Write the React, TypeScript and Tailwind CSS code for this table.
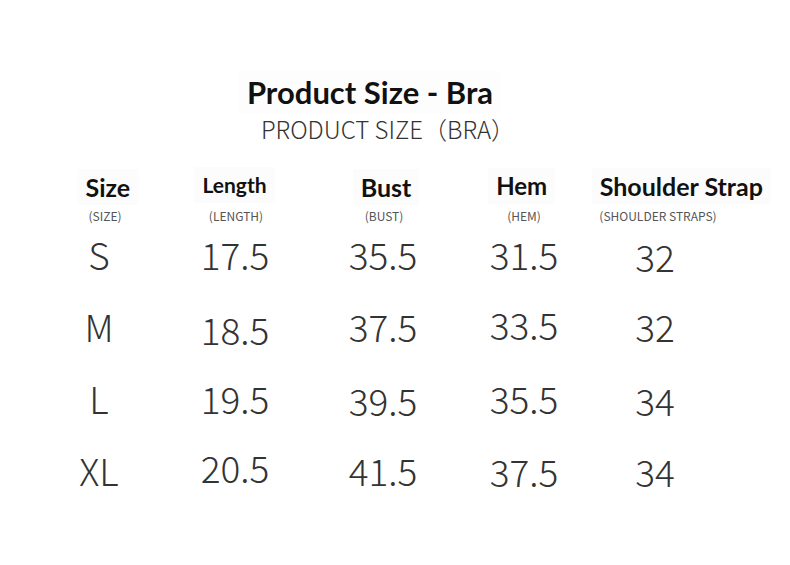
const cjk = "font-['Noto_Sans_CJK_SC',sans-serif]";
const lato = "font-['Lato',sans-serif]";

const headers = [
  { label: "Size", w: "w-[120px]", size: "text-[25px]" },
  { label: "Length", w: "w-[134px]", size: "text-[21px] -translate-y-[2px]" },
  { label: "Bust", w: "w-[170px]", size: "text-[25px]" },
  { label: "Hem", w: "w-[102px]", size: "text-[24px] -translate-y-[1px]" },
  { label: "Shoulder Strap", w: "w-[218px]", size: "text-[25px] -translate-y-[1px]" },
];

const subs = [
  { label: "(SIZE)", w: "w-[120px]" },
  { label: "(LENGTH)", w: "w-[142px]" },
  { label: "(BUST)", w: "w-[154px]" },
  { label: "(HEM)", w: "w-[126px]" },
  { label: "(SHOULDER STRAPS)", w: "w-[142px]" },
];

const colW = ["w-[120px]", "w-[152px]", "w-[144px]", "w-[138px]", "w-[124px]"];

// small per-cell nudges, the chart isn't perfectly aligned
const rows = [
  { cells: ["S", "17.5", "35.5", "31.5", "32"], nudge: ["", "", "", "", "translate-y-[2px]"] },
  { cells: ["M", "18.5", "37.5", "33.5", "32"], nudge: ["", "translate-y-[3px]", "", "-translate-y-[2px]", ""] },
  { cells: ["L", "19.5", "39.5", "35.5", "34"], nudge: ["", "", "translate-y-[2px]", "", "translate-y-[2px]"] },
  { cells: ["XL", "20.5", "41.5", "37.5", "34"], nudge: ["", "-translate-y-[3px]", "", "translate-y-[1px]", "translate-y-[1px]"] },
];

export default function App() {
  return (
    <div className="w-[790px] h-[565px] bg-white overflow-hidden">
      <div className="pt-[71px] flex flex-col items-center">
        <h1 className={`${lato} font-bold text-[31px] leading-[42px] text-[#111] -translate-x-[25px] px-2 bg-[#fdfdfd]`}>
          Product Size - Bra
        </h1>
        <p className={`${cjk} font-light text-[24px] leading-[32px] text-[#333] -translate-x-[7px]`}>
          PRODUCT SIZE（BRA）
        </p>
      </div>

      <div className="flex pl-[48px] mt-[24px]">
        {headers.map((h) => (
          <div key={h.label} className={`${h.w} flex justify-center`}>
            <span className={`${lato} font-bold ${h.size} leading-[36px] text-[#111] px-2 bg-[#fcfcfc]`}>
              {h.label}
            </span>
          </div>
        ))}
      </div>

      <div className="flex pl-[45px] mt-[3px]">
        {subs.map((s) => (
          <div key={s.label} className={`${s.w} text-center ${cjk} text-[12px] leading-[16px] text-[#555]`}>
            {s.label}
          </div>
        ))}
      </div>

      <div className="flex flex-col pl-[39px] mt-[8px] gap-[28px]">
        {rows.map((r) => (
          <div key={r.cells[0]} className="flex h-[44px] items-center">
            {r.cells.map((c, i) => (
              <div
                key={i}
                className={`${colW[i]} text-center ${cjk} font-light text-[37px] leading-[44px] text-[#333] ${r.nudge[i]}`}
              >
                {c}
              </div>
            ))}
          </div>
        ))}
      </div>
    </div>
  );
}
